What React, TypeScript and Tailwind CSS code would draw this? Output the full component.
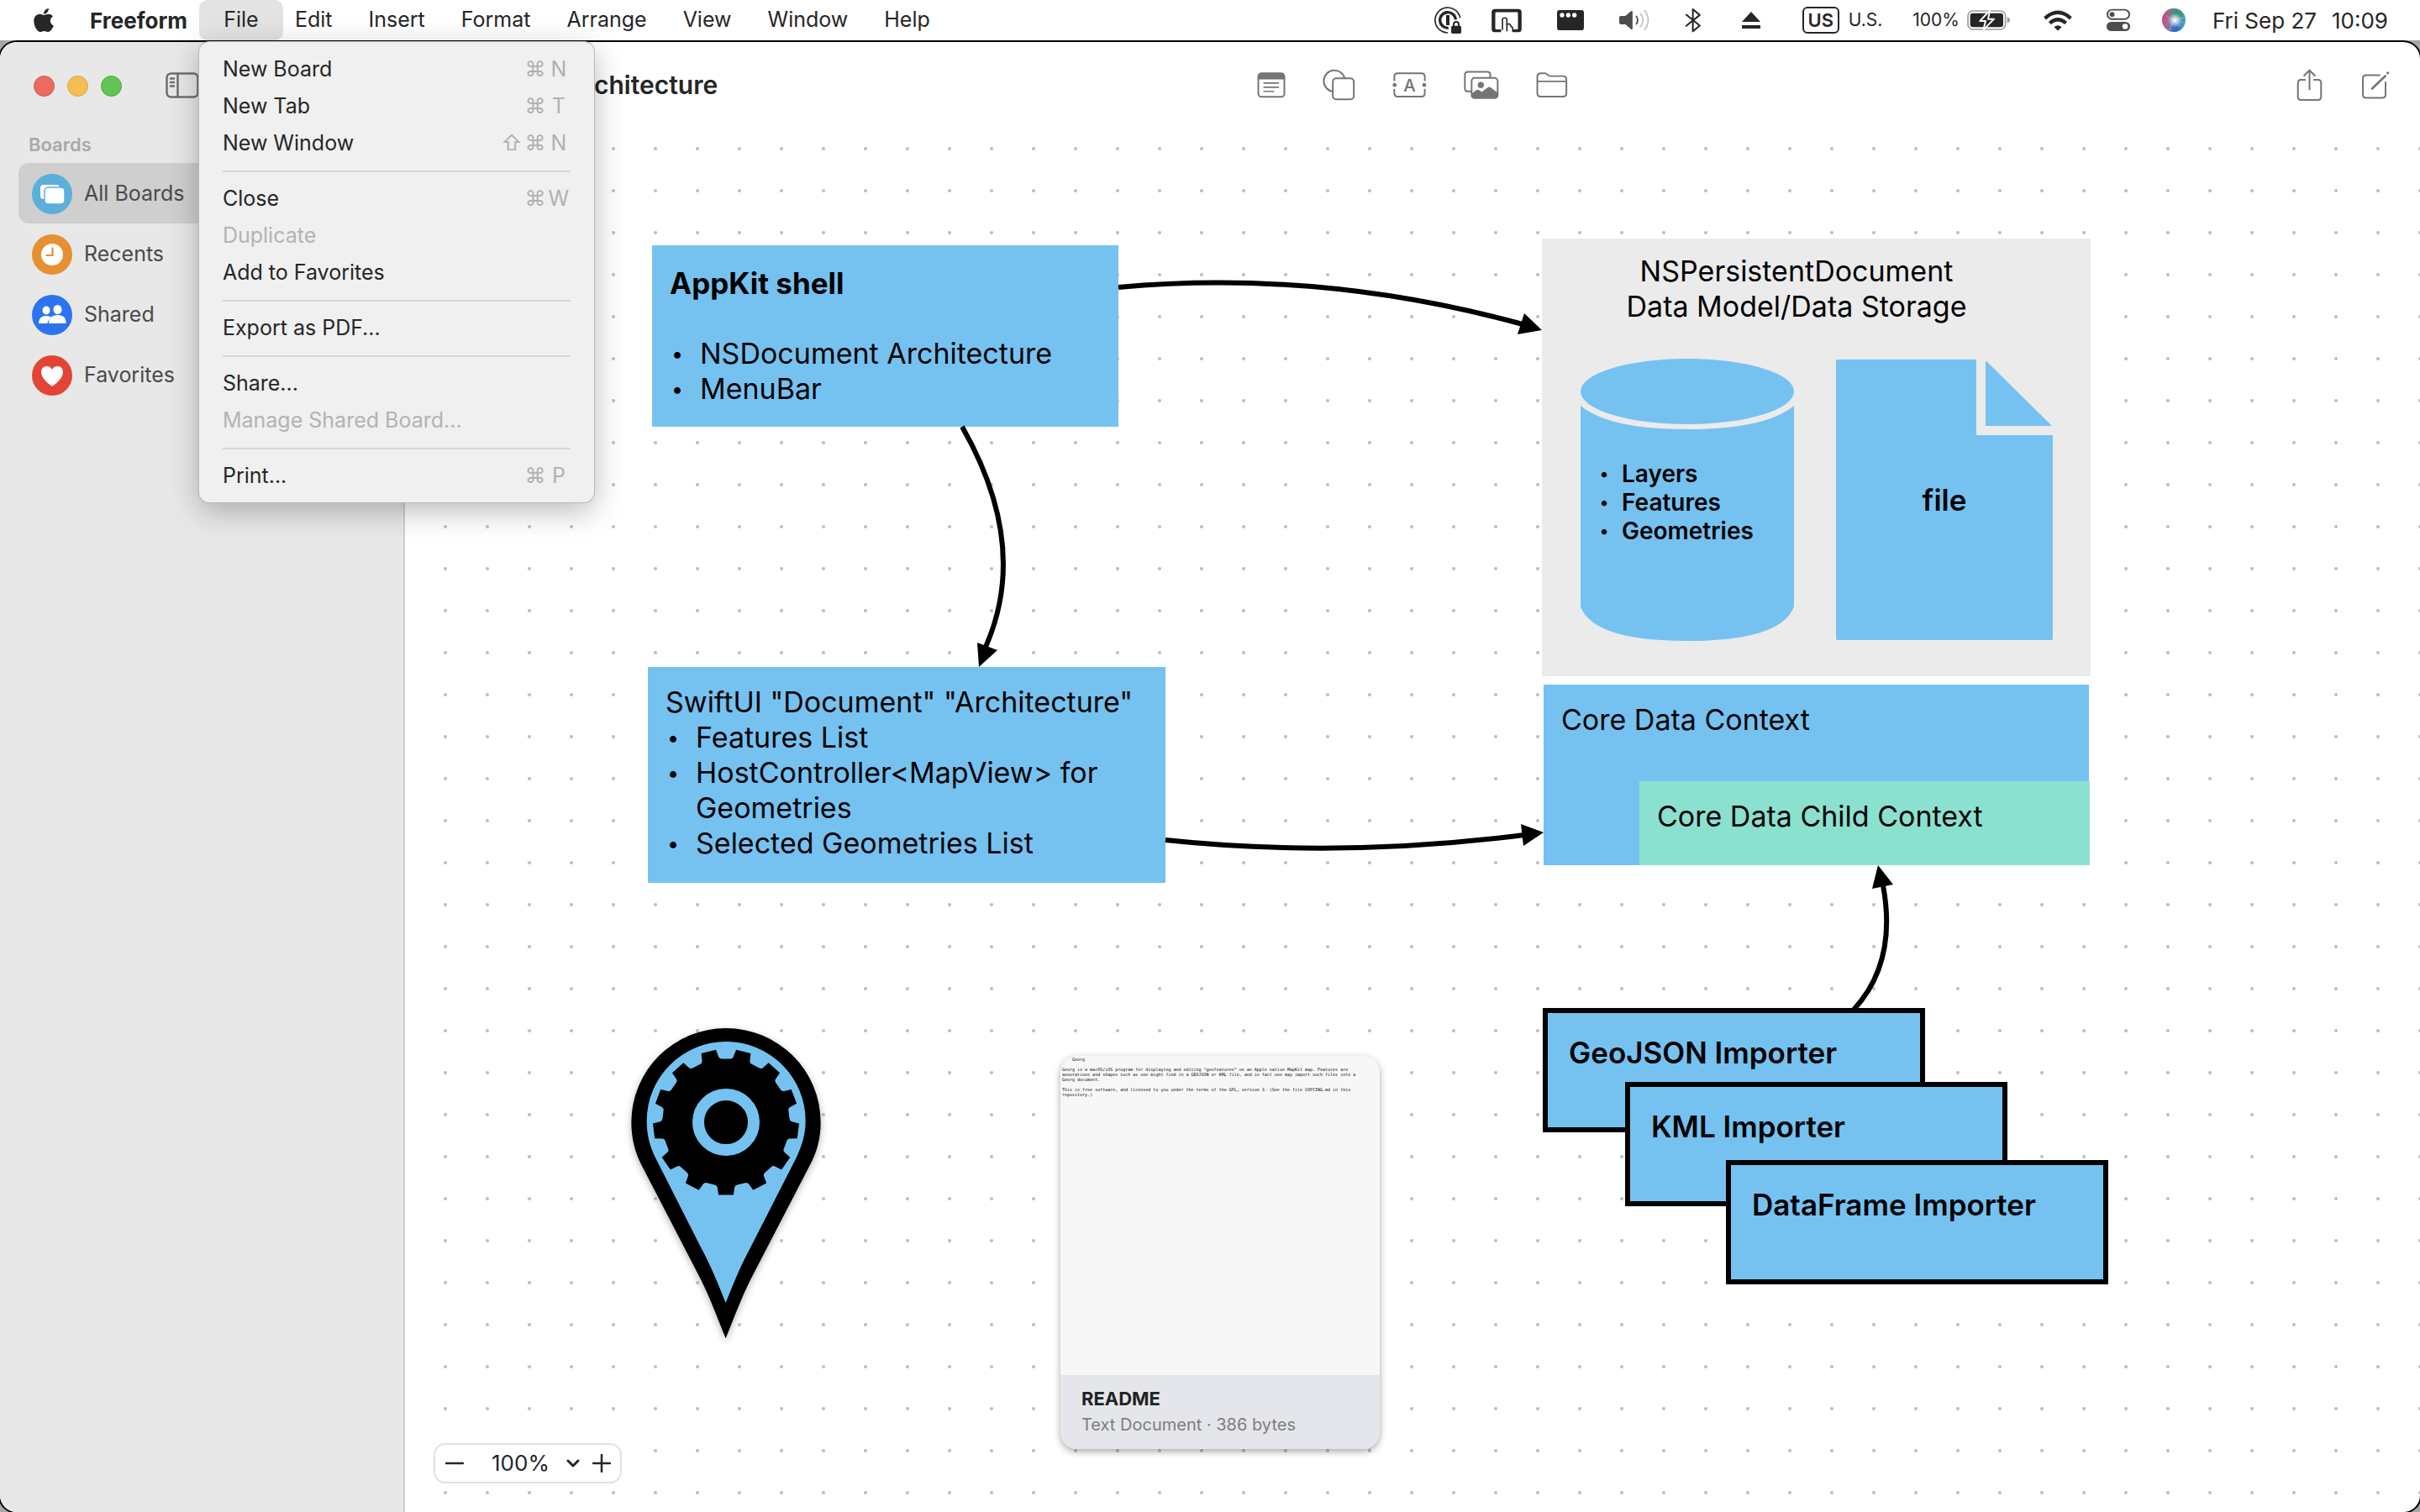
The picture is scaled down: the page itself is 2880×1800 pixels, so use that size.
import type { ReactNode } from "react";

const INK = "#262626";
const GREY = "#757575";

/* ---------- menu bar ---------- */

function AppleLogo() {
  return (
    <svg viewBox="0 0 384 512" className="h-8 w-7" fill={INK} aria-hidden="true">
      <path d="M318.7 268.700c-.2-36.700 16.400-64.400 50-84.800-18.800-26.900-47.200-41.700-84.700-44.600-35.500-2.800-74.300 20.700-88.500 20.700-15 0-49.400-19.700-76.400-19.700C63.300 141.200 4 184.800 4 273.500q0 39.300 14.400 81.200c12.800 36.700 59 126.700 107.200 125.200 25.200-.6 43-17.900 75.800-17.900 31.800 0 48.300 17.900 76.400 17.900 48.600-.7 90.400-82.500 102.600-119.300-65.200-30.700-61.700-90-61.700-91.900zm-56.600-164.200c27.300-32.400 24.800-61.900 24-72.500-24.100 1.400-52 16.400-67.900 34.900-17.500 19.800-27.800 44.300-25.600 71.900 26.100 2 49.900-11.400 69.500-34.300z" />
    </svg>
  );
}

type Item = { label: string; keys?: string[]; off?: boolean };
const fileMenu: Item[][] = [
  [
    { label: "New Board", keys: ["⌘", "N"] },
    { label: "New Tab", keys: ["⌘", "T"] },
    { label: "New Window", keys: ["⇧", "⌘", "N"] },
  ],
  [
    { label: "Close", keys: ["⌘", "W"] },
    { label: "Duplicate", off: true },
    { label: "Add to Favorites" },
  ],
  [{ label: "Export as PDF..." }],
  [{ label: "Share..." }, { label: "Manage Shared Board...", off: true }],
  [{ label: "Print...", keys: ["⌘", "P"] }],
];

function FileMenu() {
  return (
    <div
      role="menu"
      aria-label="File"
      className="absolute top-[50px] left-0 z-30 w-[470px] rounded-[12px] bg-[#f0f0f0] px-7 pt-[11px] pb-[9px] text-left shadow-[0_0_0_1px_#b8b8b8,0_10px_36px_rgba(0,0,0,0.28)]"
    >
      {fileMenu.map((group, i) => (
        <div key={i} role="group" className={i > 0 ? "mt-[10px] border-t-2 border-[#d6d6d6] pt-[10px]" : ""}>
          {group.map((item) => (
            <button
              key={item.label}
              role="menuitem"
              disabled={item.off}
              className={"flex h-11 w-full items-center justify-between text-[25px] " + (item.off ? "text-[#b3b3b3]" : "text-[#262626]")}
            >
              <span>{item.label}</span>
              {item.keys && (
                <span className="flex text-[#b0b0b0]">
                  {item.keys.map((k) => (
                    <kbd key={k} className="w-7 text-center font-[Inter,sans-serif]">
                      {k}
                    </kbd>
                  ))}
                </span>
              )}
            </button>
          ))}
        </div>
      ))}
    </div>
  );
}

function LockIcon() {
  return (
    <svg viewBox="12 24 96 96" className="h-8 w-8" fill="none" stroke={INK}>
      <path d="M60 117A45 45 0 1 1 104 64" strokeWidth="5" />
      <path d="M62 100A28 28 0 1 1 88 70" strokeWidth="10" />
      <path d="M54 54h12v36H54z" fill={INK} stroke="none" />
      <rect x="72" y="92" width="36" height="28" rx="5" fill={INK} stroke="none" />
      <path d="M81 94v-7a9 9 0 0 1 18 0v7" strokeWidth="6" />
    </svg>
  );
}

function HandIcon() {
  return (
    <svg viewBox="216 28 108 88" className="h-[29px] w-9" fill={INK}>
      <path d="M228 30h84q12 0 12 12v60q0 12-12 12h-20v-10h15q4 0 4-4V46q0-4-4-4h-74q-4 0-4 4v54q0 4 4 4h17v10h-22q-12 0-12-12V42q0-12 12-12z" />
      <path d="M255 106V69q0-7 8-7t8 7v42M271 90q2-7 8-6t7 10q6 0 6 8v10" fill="none" stroke={INK} strokeWidth="5" />
    </svg>
  );
}

function PanelIcon() {
  return (
    <svg viewBox="450 36 96 72" className="h-6 w-8">
      <rect x="450" y="36" width="96" height="72" rx="10" fill={INK} />
      <circle cx="468" cy="54" r="8" fill="#fff" />
      <circle cx="490" cy="54" r="8" fill="#fff" />
      <circle cx="512" cy="54" r="8" fill="#fff" />
    </svg>
  );
}

function SpeakerIcon() {
  return (
    <svg viewBox="668 32 118 82" className="h-7 w-10" fill="none" strokeWidth="6" strokeLinecap="round">
      <path d="M674 57h18l22-19q6-3 6 3v64q0 6-6 3l-22-19h-18q-6 0-6-6V63q0-6 6-6z" fill="#4d4d4d" />
      <path d="M735 58q10 14 0 30" stroke="#4d4d4d" />
      <path d="M751 48q20 25 0 50" stroke="#c4c4c4" />
      <path d="M768 36q26 37 0 74" stroke="#c4c4c4" />
    </svg>
  );
}

function BluetoothIcon() {
  return (
    <svg viewBox="906 28 58 88" className="h-[30px] w-5" fill="none" stroke={INK} strokeWidth="6" strokeLinejoin="round" strokeLinecap="round">
      <path d="M911 53l47 38-24 20V34l24 20-47 38" />
    </svg>
  );
}

function EjectIcon() {
  return (
    <svg viewBox="1110 42 66 60" className="h-5 w-[22px]" fill={INK}>
      <path d="M1143 42l33 36h-66zM1110 90h66v12h-66z" />
    </svg>
  );
}

function BatteryIcon() {
  return (
    <svg viewBox="0 0 156 78" className="h-[26px] w-[52px]">
      <rect x="3" y="6" width="134" height="66" rx="18" fill="none" stroke="#9c9c9c" strokeWidth="5" />
      <rect x="11" y="14" width="118" height="50" rx="10" fill={INK} />
      <path d="M143 28q10 3 10 11t-10 11z" fill="#9c9c9c" />
      <path d="M81 4L46 42h20l-8 32 38-39H75z" fill={INK} stroke="#fff" strokeWidth="6" strokeLinejoin="round" />
    </svg>
  );
}

function WifiIcon() {
  return (
    <svg viewBox="249 30 102 80" className="h-[27px] w-[34px]" fill="none" stroke={INK} strokeWidth="13">
      <path d="M254 62q46-42 92 0" />
      <path d="M271 79q29-26 58 0" />
      <path d="M288 93q12-9 24 0l-12 12z" fill={INK} strokeWidth="3" />
    </svg>
  );
}

function ControlIcon() {
  return (
    <svg viewBox="472 28 90 86" className="h-7 w-[30px]">
      <rect x="477" y="33" width="80" height="34" rx="17" fill="none" stroke="#4d4d4d" strokeWidth="6" />
      <circle cx="494" cy="50" r="9" fill="#4d4d4d" />
      <rect x="474" y="77" width="86" height="34" rx="17" fill="#4d4d4d" />
      <circle cx="542" cy="94" r="10" fill="#fff" />
    </svg>
  );
}

function SiriIcon() {
  return (
    <svg viewBox="0 0 84 84" className="h-7 w-7">
      <defs>
        <linearGradient id="siri-base" x1="0" y1="0.300" x2="1" y2="0.600">
          <stop offset="0" stopColor="#d8406e" />
          <stop offset="0.450" stopColor="#8a7fae" />
          <stop offset="1" stopColor="#3fa9c9" />
        </linearGradient>
        <radialGradient id="siri-top" cx="0.650" cy="0.150" r="0.500">
          <stop offset="0" stopColor="#2c9470" />
          <stop offset="1" stopColor="#2c9470" stopOpacity="0" />
        </radialGradient>
        <radialGradient id="siri-low" cx="0.600" cy="0.950" r="0.450">
          <stop offset="0" stopColor="#2663c4" />
          <stop offset="1" stopColor="#2663c4" stopOpacity="0" />
        </radialGradient>
        <radialGradient id="siri-core" cx="0.550" cy="0.500" r="0.300">
          <stop offset="0" stopColor="#fff" />
          <stop offset="1" stopColor="#fff" stopOpacity="0" />
        </radialGradient>
      </defs>
      <circle cx="42" cy="42" r="42" fill="url(#siri-base)" />
      <circle cx="42" cy="42" r="42" fill="url(#siri-top)" />
      <circle cx="42" cy="42" r="42" fill="url(#siri-low)" />
      <circle cx="42" cy="42" r="42" fill="url(#siri-core)" />
      <path d="M42 42l38-10M42 42l30 26M42 42L26 78M42 42L14 26" stroke="#fff" strokeOpacity="0.500" strokeWidth="2" />
    </svg>
  );
}

function Slot({ label, className, children }: { label: string; className: string; children: ReactNode }) {
  return (
    <button aria-label={label} className={"flex shrink-0 items-center justify-center " + className}>
      {children}
    </button>
  );
}

function MenuBar() {
  return (
    <header className="relative z-20 flex h-12 shrink-0 items-center justify-between bg-white px-[38px] text-[25px] text-[#262626]">
      <nav aria-label="Menu bar" className="flex h-full items-center gap-px">
        <button aria-label="Apple" className="mr-10">
          <AppleLogo />
        </button>
        <button className="pr-[21px] text-[26px] font-bold">Freeform</button>
        <div className="relative -mx-2 h-full">
          <button className="h-full w-[100px] rounded-[10px] bg-[#e3e3e3]" aria-expanded="true">
            File
          </button>
          <FileMenu />
        </div>
        {["Edit", "Insert", "Format", "Arrange", "View", "Window", "Help"].map((m) => (
          <button key={m} className="px-[21px]">
            {m}
          </button>
        ))}
      </nav>
      <div className="flex items-center gap-9">
        <Slot label="Password manager" className="w-8"><LockIcon /></Slot>
        <Slot label="Pointer" className="w-9"><HandIcon /></Slot>
        <Slot label="Panel" className="w-11"><PanelIcon /></Slot>
        <Slot label="Sound" className="w-9"><SpeakerIcon /></Slot>
        <Slot label="Bluetooth" className="w-8"><BluetoothIcon /></Slot>
        <Slot label="Eject" className="w-[34px]"><EjectIcon /></Slot>
        <button className="ml-2 flex items-center gap-[11px] text-[21px]">
          <span className="flex h-8 w-11 items-center justify-center rounded-[6px] border-2 border-[#262626] text-[22px] font-semibold">US</span>
          <span>U.S.</span>
        </button>
        <button className="flex items-center gap-[9px] text-[21px]">
          <span>100%</span>
          <BatteryIcon />
        </button>
        <Slot label="Wi-Fi" className="w-10"><WifiIcon /></Slot>
        <Slot label="Control Center" className="w-8"><ControlIcon /></Slot>
        <Slot label="Siri" className="w-7"><SiriIcon /></Slot>
        <button className="-ml-1 flex gap-[18px] text-[26px]">
          <span>Fri Sep 27</span>
          <span>10:09</span>
        </button>
      </div>
    </header>
  );
}

/* ---------- sidebar ---------- */

function SidebarIcon() {
  return (
    <svg viewBox="0 0 40 32" className="h-8 w-10" fill="none" stroke="#6e6e6e" strokeWidth="2.500" strokeLinecap="round">
      <rect x="1.500" y="1.500" width="37" height="28" rx="5" />
      <path d="M14.500 2v27M6 7.500h4M6 12h4M6 16.500h4" />
    </svg>
  );
}

const boards = [
  {
    name: "All Boards",
    color: "#5caedb",
    art: (
      <>
        <rect x="10" y="13" width="23" height="17" rx="4" fill="#fff" />
        <rect x="15" y="16" width="24" height="20" rx="4.500" fill="#fff" stroke="#5caedb" strokeWidth="1.500" />
      </>
    ),
  },
  {
    name: "Recents",
    color: "#e68f33",
    art: (
      <>
        <circle cx="24" cy="24" r="13" fill="#fff" />
        <path d="M24.500 15.500v9.500h-8" fill="none" stroke="#e68f33" strokeWidth="2.200" />
      </>
    ),
  },
  {
    name: "Shared",
    color: "#2c73ee",
    art: (
      <g fill="#fff">
        <ellipse cx="17" cy="18.500" rx="4.500" ry="5" />
        <ellipse cx="30.500" cy="17.500" rx="5" ry="5.500" />
        <path d="M8 34q0-9 9-9 4 0 6 2-4 3-4.500 7z" />
        <path d="M20 34q0-10 10.500-10T40.500 34z" />
      </g>
    ),
  },
  {
    name: "Favorites",
    color: "#e34435",
    art: <path d="M24 37Q11 28 11 20.500 11 13 17.500 13 22 13 24 17q2-4 6.500-4Q37 13 37 20.500 37 28 24 37z" fill="#fff" />,
  },
];

function Sidebar() {
  return (
    <aside className="w-[482px] shrink-0 border-r-2 border-[#cfcfcf] bg-[#e8e8e8]">
      <div className="flex h-[104px] items-center pl-10">
        <div className="flex gap-[15px]">
          <button aria-label="Close window" className="size-[25px] rounded-full border border-[#d8564b] bg-[#ec6a5e]" />
          <button aria-label="Minimize window" className="size-[25px] rounded-full border border-[#dba641] bg-[#f4be50]" />
          <button aria-label="Zoom window" className="size-[25px] rounded-full border border-[#52a842] bg-[#61c455]" />
        </div>
        <button aria-label="Toggle sidebar" className="ml-[52px]">
          <SidebarIcon />
        </button>
      </div>
      <h2 className="h-10 pl-[34px] text-[22px] leading-9 font-semibold text-[#a9a9a9]">Boards</h2>
      <ul className="px-[22px]">
        {boards.map((b, i) => (
          <li key={b.name}>
            <button
              className={
                "flex h-[72px] w-full items-center gap-[14px] rounded-[12px] pt-px pl-4 text-[25px] text-[#4a4a4a] " +
                (i === 0 ? "bg-[#cfcfcf]" : "")
              }
            >
              <svg viewBox="0 0 48 48" className="size-12">
                <circle cx="24" cy="24" r="24" fill={b.color} />
                {b.art}
              </svg>
              {b.name}
            </button>
          </li>
        ))}
      </ul>
    </aside>
  );
}

/* ---------- toolbar ---------- */

function NoteIcon() {
  return (
    <svg viewBox="110 76 102 94" className="h-[31px] w-[34px]" fill="none" stroke={GREY} strokeLinecap="round">
      <rect x="114" y="80" width="94" height="85" rx="12" strokeWidth="6" />
      <path d="M114 100V90q0-10 10-10h74q10 0 10 10v10z" fill={GREY} strokeWidth="2" />
      <path d="M134 115h53M134 130h53M134 145h35" strokeWidth="5" />
    </svg>
  );
}

function ShapesIcon() {
  return (
    <svg viewBox="341 62 116 114" className="h-[38px] w-[39px]" fill="none" stroke={GREY} strokeWidth="6">
      <path d="M378 143A38 38 0 1 1 420 98" />
      <rect x="377" y="96" width="75" height="75" rx="12" />
    </svg>
  );
}

function TextBoxIcon() {
  return (
    <svg viewBox="587 76 124 94" className="h-[31px] w-[41px]">
      <path d="M594 108V92q0-12 12-12h86q12 0 12 12v16M594 136v16q0 12 12 12h86q12 0 12-12v-16" fill="none" stroke={GREY} strokeWidth="6" />
      <circle cx="595" cy="122" r="7" fill={GREY} />
      <circle cx="702" cy="122" r="7" fill={GREY} />
      <text x="649" y="145" textAnchor="middle" fontSize="62" fontFamily="Inter" fontWeight="500" fill={GREY}>
        A
      </text>
    </svg>
  );
}

function PhotosIcon() {
  return (
    <svg viewBox="845 76 126 104" className="h-[35px] w-[42px]" fill="none" stroke={GREY} strokeWidth="6">
      <path d="M872 150h-12q-11 0-11-11V91q0-11 11-11h69q11 0 11 11v10" />
      <rect x="873" y="102" width="93" height="72" rx="11" />
      <circle cx="906" cy="127" r="11" fill={GREY} stroke="none" />
      <path d="M873 158l17-13q5-3 10 0l9 7 21-16q6-4 12 0l24 19v10q0 9-9 9h-75q-9 0-9-9z" fill={GREY} stroke="none" />
    </svg>
  );
}

function FolderIcon() {
  return (
    <svg viewBox="1100 76 114 94" className="h-[31px] w-[38px]" fill="none" stroke={GREY} strokeWidth="6">
      <path d="M1104 152V92q0-12 12-12h14q6 0 10 4l5 4q3 2 7 2h45q12 0 12 12v50q0 12-12 12h-81q-12 0-12-12zM1104 109h105" />
    </svg>
  );
}

function ShareIcon() {
  return (
    <svg viewBox="1150 240 92 116" className="h-[39px] w-[31px]" fill="none" stroke={GREY} strokeWidth="6" strokeLinecap="round">
      <path d="M1180 279h-14q-11 0-11 11v49q0 11 11 11h60q11 0 11-11v-49q0-11-11-11h-14M1196 313v-67M1177 264l19-19 19 19" />
    </svg>
  );
}

function ComposeIcon() {
  return (
    <svg viewBox="1380 248 102 104" className="h-[35px] w-[34px]" fill="none" stroke={GREY} strokeWidth="6">
      <path d="M1448 264h-50q-12 0-12 12v57q0 12 12 12h57q12 0 12-12v-46" />
      <path d="M1419 312l47-45" strokeWidth="8" strokeLinecap="round" />
      <circle cx="1475" cy="256" r="5" fill={GREY} stroke="none" />
    </svg>
  );
}

function Toolbar() {
  return (
    <div className="grid h-[102px] shrink-0 grid-cols-[1fr_auto_1fr] items-center">
      <h1 className="pl-[225px] text-[30px] font-semibold whitespace-nowrap text-[#262626]">chitecture</h1>
      <div className="flex items-center gap-11">
        <button aria-label="Sticky note"><NoteIcon /></button>
        <button aria-label="Shapes"><ShapesIcon /></button>
        <button aria-label="Text box"><TextBoxIcon /></button>
        <button aria-label="Photos"><PhotosIcon /></button>
        <button aria-label="Files"><FolderIcon /></button>
      </div>
      <div className="flex items-center justify-end gap-[46px] pr-9">
        <button aria-label="Share"><ShareIcon /></button>
        <button aria-label="New board"><ComposeIcon /></button>
      </div>
    </div>
  );
}

/* ---------- board ---------- */

function Bullets({ items, bullet }: { items: string[]; bullet: string }) {
  return (
    <ul>
      {items.map((t) => (
        <li key={t} className="flex">
          <span className={"shrink-0 " + bullet}>•</span>
          <span>{t}</span>
        </li>
      ))}
    </ul>
  );
}

function Connectors() {
  return (
    <svg viewBox="482 152 2398 1648" className="absolute top-0 left-0 h-[1648px] w-[2398px]" fill="none" stroke="#000" strokeWidth="6">
      <path d="M1331 342Q1571 320 1812 386M1145 508Q1226 650 1173 770M1387 1000Q1595 1022 1814 994M2206 1202Q2258 1146 2241 1054" />
      <g fill="#000" stroke="none">
        <path d="M1835 393l-21-20-8 25z" />
        <path d="M1165 794l-2-29 24 9z" />
        <path d="M1837 991l-27-10 3 26z" />
        <path d="M2235 1030l-7 28 25-5z" />
      </g>
    </svg>
  );
}

function Cylinder() {
  return (
    <svg viewBox="1881 427 254 336" className="absolute inset-0 size-full" fill="#75c2f1">
      <ellipse cx="2008" cy="466" rx="127" ry="39" />
      <path d="M1881 483Q1914 511 2008 511T2135 483V722Q2120 763 2008 763T1881 722z" />
    </svg>
  );
}

function FileShape() {
  return (
    <svg viewBox="2185 428 258 335" className="absolute inset-0 size-full" fill="#75c2f1">
      <path d="M2187 428h165v90h91v242q0 2-2 2h-254q-2 0-2-2V430q0-2 2-2z" />
      <path d="M2363 431q0-2 2 0l76 75q1 1-1 1h-76q-1 0-1-1z" />
    </svg>
  );
}

const TEETH = 13;
function gearPath(cx: number, cy: number, outer: number, root: number) {
  const step = (Math.PI * 2) / TEETH;
  const at = (r: number, a: number) => `${(cx + r * Math.sin(a)).toFixed(1)} ${(cy + r * Math.cos(a)).toFixed(1)}`;
  let d = "";
  for (let i = 0; i < TEETH; i++) {
    const a = i * step;
    d += `${i ? "L" : "M"}${at(outer, a - 0.103)}L${at(outer, a + 0.103)}L${at(root + 8, a + 0.130)}Q${at(root, a + 0.140)} ${at(root, a + 0.180)}`;
    d += `L${at(root, a + step - 0.180)}Q${at(root, a + step - 0.140)} ${at(root + 8, a + step - 0.130)}`;
  }
  return d + "z";
}

function Pin() {
  return (
    <svg
      viewBox="0 0 900 1260"
      role="img"
      aria-label="Map pin with gear"
      className="absolute top-[1048px] left-[238px] h-[420px] w-[300px] drop-shadow-[0_3px_4px_rgba(0,0,0,0.3)]"
    >
      <path d="M431 1180C395 1090 372 1028 340 965L130 560C107 515 94 465 94 408A338 336 0 0 1 770 408C770 465 757 515 732 560L522 965C490 1028 467 1090 431 1180z" />
      <path
        d="M431 1053C400 975 375 915 345 860L180 535C158 490 149 450 149 403A283.500 283 0 0 1 716 403C716 450 704 490 683 535L517 860C487 915 462 975 431 1053z"
        fill="#75c2f1"
      />
      <path d={gearPath(432, 408, 261, 227)} />
      <circle cx="432" cy="408" r="99" fill="none" stroke="#75c2f1" strokeWidth="42" />
    </svg>
  );
}

function ReadmeCard() {
  return (
    <article className="absolute top-[1105px] left-[780px] flex h-[468px] w-[380px] flex-col overflow-hidden rounded-[20px] bg-[#f7f7f7] shadow-[0_3px_8px_rgba(0,0,0,0.35)]">
      <pre className="flex-1 pt-px pl-[2px] font-['DejaVu_Sans_Mono',monospace] text-[5px] leading-[6px] text-black">
        {`    Georg

Georg is a macOS/iOS program for displaying and editing "geofeatures" on an Apple native MapKit map. Features are
annotations and shapes such as one might find in a GEOJSON or KML file, and in fact one may import such files into a
Georg document.

This is free software, and licensed to you under the terms of the GPL, version 3. (See the file COPYING.md in this
repository.)`}
      </pre>
      <footer className="h-[88px] bg-[#e5e6eb] pt-3 pl-[25px]">
        <h3 className="text-[22px] leading-8 font-bold text-[#222]">README</h3>
        <p className="text-[20px] leading-[30px] text-[#7d7d7d]">Text Document · 386 bytes</p>
      </footer>
    </article>
  );
}

function Board() {
  return (
    <div className="relative flex-1 bg-[radial-gradient(circle,#c0c0c0_1.5px,transparent_2.5px)] bg-[length:50px_50px] bg-[position:23px_0px] text-[34px] leading-[42px] text-black">
      <section className="absolute top-[140px] left-[294px] flex h-[216px] w-[555px] flex-col justify-center bg-[#75c2f1] pl-[21px]">
        <h3 className="mb-[42px] text-[35px] font-bold">AppKit shell</h3>
        <Bullets items={["NSDocument Architecture", "MenuBar"]} bullet="w-9 pl-[2px] text-[25px]" />
      </section>

      <section className="absolute top-[642px] left-[289px] flex h-[257px] w-[616px] flex-col justify-center bg-[#75c2f1] pb-[6px] pl-[21px]">
        <p className="whitespace-nowrap">SwiftUI "Document" "Architecture"</p>
        <Bullets
          items={["Features List", "HostController<MapView> for Geometries", "Selected Geometries List"]}
          bullet="w-9 pl-[2px] text-[25px]"
        />
      </section>

      <section className="absolute top-[132px] left-[1353px] h-[521px] w-[653px] bg-[#ebebeb]">
        <h3 className="pt-[18px] pr-[47px] text-center">
          NSPersistentDocument
          <br />
          Data Model/Data Storage
        </h3>
        <div className="absolute top-[143px] left-[46px] flex h-[336px] w-[254px] items-center pt-[6px] pl-[21px] text-[28px] leading-[34px] font-semibold">
          <Cylinder />
          <div className="relative">
            <Bullets items={["Layers", "Features", "Geometries"]} bullet="w-7 pl-[2px] text-[20px]" />
          </div>
        </div>
        <div className="absolute top-[144px] left-[350px] flex h-[335px] w-[258px] items-center justify-center pb-[2px] text-[35px] font-semibold">
          <FileShape />
          <span className="relative">file</span>
        </div>
      </section>

      <section className="absolute top-[663px] left-[1355px] h-[215px] w-[649px] bg-[#75c2f1] pt-[21px] pl-[21px]">Core Data Context</section>
      <section className="absolute top-[778px] left-[1469px] h-[100px] w-[536px] bg-[#8be1d0] pt-[21px] pl-[21px]">Core Data Child Context</section>

      <Connectors />

      <section className="absolute top-[1048px] left-[1354px] h-[148px] w-[455px] border-6 border-black bg-[#75c2f1] pt-[26px] pl-[25px] text-[35px] font-semibold">
        GeoJSON Importer
      </section>
      <section className="absolute top-[1136px] left-[1452px] h-[148px] w-[455px] border-6 border-black bg-[#75c2f1] pt-[26px] pl-[25px] text-[35px] font-semibold">
        KML Importer
      </section>
      <section className="absolute top-[1229px] left-[1572px] h-[148px] w-[455px] border-6 border-black bg-[#75c2f1] pt-[26px] pl-[25px] text-[35px] font-semibold">
        DataFrame Importer
      </section>

      <Pin />
      <ReadmeCard />

      <div className="absolute bottom-[34px] left-[34px] flex h-12 w-56 items-center rounded-[14px] border-2 border-[#e2e2e2] bg-white pr-[11px] pl-3 text-[#262626]">
        <button aria-label="Zoom out">
          <svg viewBox="0 0 22 22" className="size-[22px]" stroke="currentColor" strokeWidth="2.500" strokeLinecap="round">
            <path d="M1 11h20" />
          </svg>
        </button>
        <button className="ml-[33px] flex items-center gap-5 text-[26px]" aria-haspopup="listbox">
          100%
          <svg viewBox="0 0 16 10" className="h-[10px] w-4" fill="none" stroke="currentColor" strokeWidth="3" strokeLinecap="round" strokeLinejoin="round">
            <path d="M2 2l6 6 6-6" />
          </svg>
        </button>
        <button aria-label="Zoom in" className="ml-auto">
          <svg viewBox="0 0 22 22" className="size-[22px]" stroke="currentColor" strokeWidth="2.500" strokeLinecap="round">
            <path d="M1 11h20M11 1v20" />
          </svg>
        </button>
      </div>
    </div>
  );
}

export default function App() {
  return (
    <div className="flex h-screen flex-col overflow-hidden bg-[#a6a6a6] font-[Inter,sans-serif]">
      <MenuBar />
      <main className="mt-[2px] flex min-h-0 flex-1 overflow-hidden rounded-[20px] bg-white shadow-[0_0_0_2px_#000]">
        <Sidebar />
        <div className="flex min-w-0 flex-1 flex-col">
          <Toolbar />
          <Board />
        </div>
      </main>
    </div>
  );
}
